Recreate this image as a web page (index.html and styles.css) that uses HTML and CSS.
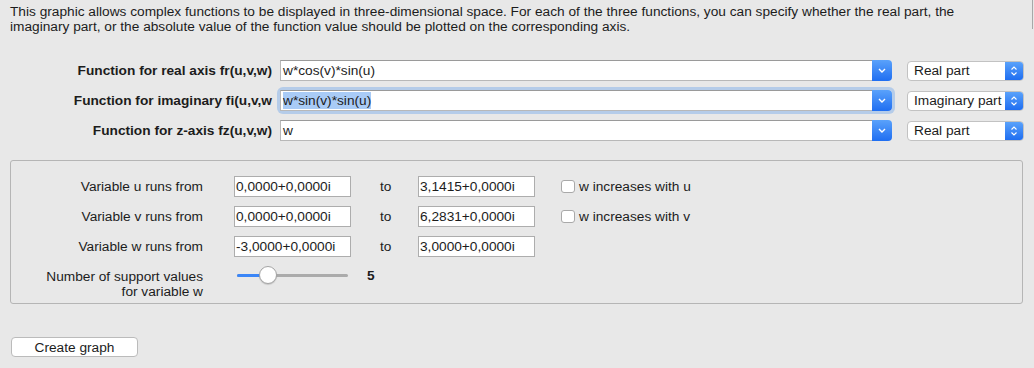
FILE: index.html
```html
<!DOCTYPE html>
<html lang="en">
<head>
  <meta charset="UTF-8" />
  <title>Complex functions in 3D</title>
  <link rel="stylesheet" href="styles.css">
</head>
<body>
  <div class="intro">
    This graphic allows complex functions to be displayed in three-dimensional space. For each of the three functions, you can specify whether the real part, the<br>
    imaginary part, or the absolute value of the function value should be plotted on the corresponding axis.
  </div>

  <div class="functions">
    <div class="func-row">
      <div class="func-label">Function for real axis fr(u,v,w)</div>
      <div class="combo">
        <div class="field">w*cos(v)*sin(u)</div>
        <div class="combo-btn">
          <svg width="8" height="5" viewBox="0 0 8 5"><path d="M1 1l3 3 3-3" fill="none" stroke="#fff" stroke-width="1.4"/></svg>
        </div>
      </div>
      <div class="select">
        <span class="select-text">Real part</span>
        <span class="select-btn">
          <svg width="8" height="12" viewBox="0 0 8 12"><path d="M1.5 4.5l2.5-2.5 2.5 2.5M1.5 7.5l2.5 2.5 2.5-2.5" fill="none" stroke="#fff" stroke-width="1.1"/></svg>
        </span>
      </div>
    </div>

    <div class="func-row">
      <div class="func-label">Function for imaginary fi(u,v,w</div>
      <div class="combo focused">
        <div class="field"><span class="selection">w*sin(v)*sin(u)</span></div>
        <div class="combo-btn">
          <svg width="8" height="5" viewBox="0 0 8 5"><path d="M1 1l3 3 3-3" fill="none" stroke="#fff" stroke-width="1.4"/></svg>
        </div>
      </div>
      <div class="select">
        <span class="select-text">Imaginary part</span>
        <span class="select-btn">
          <svg width="8" height="12" viewBox="0 0 8 12"><path d="M1.5 4.5l2.5-2.5 2.5 2.5M1.5 7.5l2.5 2.5 2.5-2.5" fill="none" stroke="#fff" stroke-width="1.1"/></svg>
        </span>
      </div>
    </div>

    <div class="func-row">
      <div class="func-label">Function for z-axis fz(u,v,w)</div>
      <div class="combo">
        <div class="field">w</div>
        <div class="combo-btn">
          <svg width="8" height="5" viewBox="0 0 8 5"><path d="M1 1l3 3 3-3" fill="none" stroke="#fff" stroke-width="1.4"/></svg>
        </div>
      </div>
      <div class="select">
        <span class="select-text">Real part</span>
        <span class="select-btn">
          <svg width="8" height="12" viewBox="0 0 8 12"><path d="M1.5 4.5l2.5-2.5 2.5 2.5M1.5 7.5l2.5 2.5 2.5-2.5" fill="none" stroke="#fff" stroke-width="1.1"/></svg>
        </span>
      </div>
    </div>
  </div>

  <div class="group">
    <div class="var-grid">
      <div class="var-label">Variable u runs from</div>
      <div class="box">0,0000+0,0000i</div>
      <div class="to">to</div>
      <div class="box">3,1415+0,0000i</div>
      <label class="check"><span class="checkbox"></span>w increases with u</label>

      <div class="var-label">Variable v runs from</div>
      <div class="box">0,0000+0,0000i</div>
      <div class="to">to</div>
      <div class="box">6,2831+0,0000i</div>
      <label class="check"><span class="checkbox"></span>w increases with v</label>

      <div class="var-label">Variable w runs from</div>
      <div class="box">-3,0000+0,0000i</div>
      <div class="to">to</div>
      <div class="box">3,0000+0,0000i</div>
      <div></div>

      <div class="var-label two-line">Number of support values<br>for variable w</div>
      <div class="slider">
        <div class="track">
          <div class="track-fill"></div>
          <div class="knob"></div>
        </div>
      </div>
      <div class="slider-value">5</div>
    </div>
  </div>

  <button class="create-btn">Create graph</button>
</body>
</html>
```

FILE: styles.css
```css
body {
  margin: 0;
  width: 1034px;
  height: 368px;
  overflow: hidden;
  background: #e8e8e8;
  font-family: "Liberation Sans", Arial, sans-serif;
  font-size: 13.7px;
  color: #1c1c1c;
}

.intro {
  height: 29px;
  box-sizing: border-box;
  padding: 4px 0 0 10px;
  line-height: 15px;
  margin-right: 1px;
  border-right: 1px solid #a8a8a8;
  white-space: nowrap;
}

.functions {
  margin-top: 31px;
  display: flex;
  flex-direction: column;
  gap: 9px;
}

.func-row {
  display: flex;
  align-items: center;
  height: 21px;
}

.func-label {
  width: 280px;
  box-sizing: border-box;
  padding-right: 8px;
  text-align: right;
  font-weight: bold;
  white-space: nowrap;
  overflow: hidden;
}

.combo {
  display: flex;
  width: 612px;
  height: 21px;
  margin-right: 15px;
}

.combo.focused {
  box-shadow: 0 0 0 3px rgba(120, 170, 235, 0.45);
  border-radius: 3px;
}

.combo .field {
  flex: 1;
  background: #fff;
  border: 1px solid #b8b8b8;
  border-top-color: #9a9a9a;
  border-right: none;
  padding-left: 2px;
  line-height: 19px;
  white-space: nowrap;
}

.selection {
  background: #a9cbf6;
  padding: 1px 0;
}

.combo-btn {
  width: 20px;
  display: flex;
  align-items: center;
  justify-content: center;
  background: linear-gradient(#5aa2fb, #1f6ef1);
  border-radius: 0 4px 4px 0;
}

.select {
  display: flex;
  width: 117px;
  height: 20px;
  box-sizing: border-box;
  background: #fff;
  border: 1px solid #c2c2c2;
  border-radius: 4px;
  overflow: hidden;
}

.select-text {
  flex: 1;
  padding-left: 6px;
  line-height: 18px;
  white-space: nowrap;
  overflow: hidden;
}

.select-btn {
  width: 18px;
  flex-shrink: 0;
  display: flex;
  align-items: center;
  justify-content: center;
  background: linear-gradient(#5aa2fb, #1f6ef1);
}

.group {
  margin: 19px 11px 0 10px;
  height: 144px;
  box-sizing: border-box;
  border: 1px solid #b5b5b5;
  border-radius: 3px;
  padding-top: 15px;
}

.var-grid {
  display: grid;
  grid-template-columns: 223px 117px 67px 117px 1fr;
  grid-template-rows: 21px 21px 21px auto;
  row-gap: 9px;
  align-items: center;
}

.var-label {
  padding-right: 31px;
  text-align: right;
  white-space: nowrap;
}

.var-label.two-line {
  align-self: start;
  margin-top: 3px;
  line-height: 15px;
}

.box {
  height: 21px;
  box-sizing: border-box;
  background: #fff;
  border: 1px solid #adadad;
  padding-left: 1px;
  line-height: 19px;
  white-space: nowrap;
}

.to {
  padding-left: 29px;
}

.check {
  display: flex;
  align-items: center;
  padding-left: 26px;
  white-space: nowrap;
}

.checkbox {
  width: 14px;
  height: 13px;
  box-sizing: border-box;
  margin-right: 4px;
  background: #fff;
  border: 1px solid #a9a9a9;
  border-radius: 3px;
}

.slider {
  align-self: start;
  height: 18px;
  padding-left: 3px;
  display: flex;
  align-items: center;
}

.track {
  position: relative;
  width: 111px;
  height: 3px;
  border-radius: 2px;
  background: #ababab;
}

.track-fill {
  width: 25px;
  height: 3px;
  border-radius: 2px 0 0 2px;
  background: #3b86f7;
}

.knob {
  position: absolute;
  left: 22px;
  top: -8px;
  width: 18px;
  height: 18px;
  box-sizing: border-box;
  border-radius: 50%;
  background: #fff;
  border: 1px solid #a4a4a4;
  box-shadow: 0 1px 1px rgba(0, 0, 0, 0.15);
}

.slider-value {
  align-self: start;
  padding-left: 16px;
  margin-top: 2px;
  font-weight: bold;
}

.create-btn {
  display: block;
  margin: 33px 0 0 11px;
  width: 127px;
  height: 20px;
  padding: 0;
  background: #fff;
  border: 1px solid #bbb;
  border-radius: 4px;
  font-family: "Liberation Sans", Arial, sans-serif;
  font-size: 13.7px;
  color: #1c1c1c;
}
```
